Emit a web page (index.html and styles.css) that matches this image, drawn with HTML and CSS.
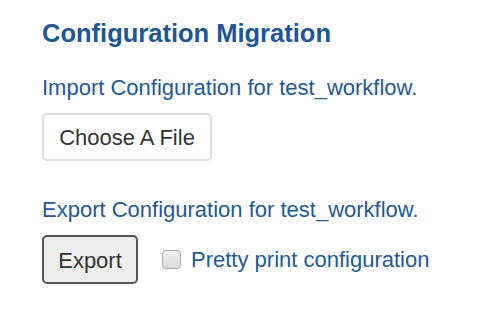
FILE: index.html
```html
<!DOCTYPE html>
<html lang="en">
<head>
    <meta charset="UTF-8">
    <title>Configuration Migration</title>
    <link rel="stylesheet" href="styles.css">
</head>
<body>

<div class="migration">
    <h2>Configuration Migration</h2>

    <p class="label">Import Configuration for test_workflow.</p>
    <button class="btn btn-file">Choose A File</button>

    <p class="label export-label">Export Configuration for test_workflow.</p>
    <div class="export-row">
        <button class="btn btn-export">Export</button>
        <label class="check">
            <input type="checkbox">
            <span>Pretty print configuration</span>
        </label>
    </div>
</div>

</body>
</html>
```

FILE: styles.css
```css
* {
    margin: 0;
    padding: 0;
    box-sizing: border-box;
}

body {
    font-family: 'Liberation Sans', Arial, sans-serif;
    background-color: #fff;
    color: #225a94;
}

.migration {
    padding: 18px 42px;
}

.migration h2 {
    font-size: 25.5px;
    font-weight: bold;
    color: #1d5595;
    line-height: 30px;
}

.label {
    font-size: 22px;
    line-height: 26px;
    margin-top: 27px;
}

.export-label {
    margin-top: 36px;
}

.btn {
    display: block;
    font-family: inherit;
    font-size: 22px;
    color: #333;
    border-radius: 5px;
    padding-top: 2px;
    cursor: pointer;
}

.btn-file {
    margin-top: 12px;
    width: 170px;
    height: 48px;
    background-color: #fff;
    border: 2px solid #ddd;
}

.export-row {
    margin-top: 12px;
    display: flex;
    align-items: center;
    gap: 24px;
}

.btn-export {
    width: 96px;
    height: 49px;
    background-color: #eee;
    border: 2px solid #555;
}

.check {
    display: flex;
    align-items: center;
    gap: 10px;
    font-size: 22px;
}

.check input {
    appearance: none;
    width: 19px;
    height: 19px;
    border: 1px solid #aaa;
    border-radius: 4px;
    background: linear-gradient(#f2f2f2, #dcdcdc);
}
```
